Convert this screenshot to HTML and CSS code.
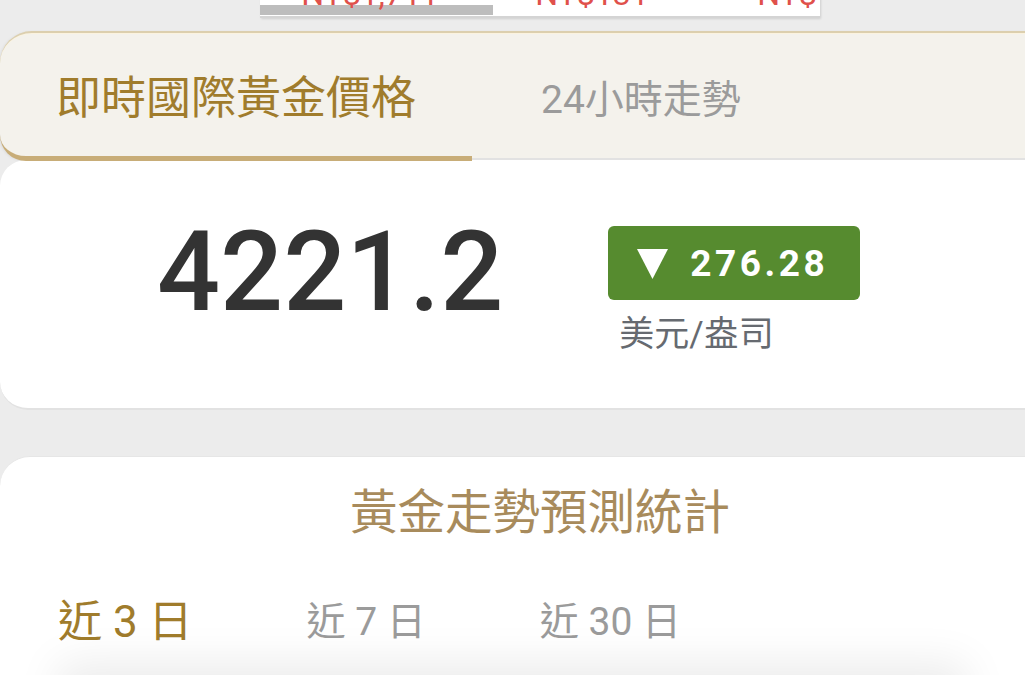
FILE: index.html
```html
<!DOCTYPE html>
<html>

<head>
    <meta charset="utf-8">
    <title>即時國際黃金價格</title>
    <link rel="stylesheet" href="styles.css">
</head>

<body>
    <div class="page">
        <div class="rate-table">
            <div class="rate-row">
                <div class="rate-cell">NT$1,711</div>
                <div class="rate-cell">NT$131</div>
                <div class="rate-cell">NT$145</div>
            </div>
            <div class="scrollbar">
                <div class="scrollbar-thumb"></div>
            </div>
        </div>

        <div class="tabs">
            <div class="tab active">即時國際黃金價格</div>
            <div class="tab">24小時走勢</div>
        </div>

        <div class="price-card">
            <div class="price">4221.2</div>
            <div class="change-col">
                <div class="change down">
                    <svg class="change-arrow" width="31" height="30" viewBox="0 0 31 30">
                        <polygon points="0,0 31,0 15.5,30" fill="#fff" />
                    </svg>
                    <span class="change-value">276.28</span>
                </div>
                <div class="unit">美元/盎司</div>
            </div>
        </div>

        <div class="forecast-card">
            <div class="forecast-title">黃金走勢預測統計</div>
            <div class="periods">
                <div class="period active">近 3 日</div>
                <div class="period">近 7 日</div>
                <div class="period">近 30 日</div>
            </div>
        </div>
    </div>

    <div class="bottom-shade"></div>
</body>

</html>
```

FILE: styles.css
```css
body {
    margin: 0;
    background: #ececec;
    font-family: Roboto, "Noto Sans CJK TC", sans-serif;
    overflow: hidden;
}

.page {
    width: 1080px;
}

/* exchange table, scrolled almost out of view */
.rate-table {
    width: 560px;
    margin: -16px auto 0;
    background: white;
    border-bottom: 2px solid #d4d4d4;
    box-shadow: 1px 1px 2px rgba(0, 0, 0, 0.12);
    padding-bottom: 1px;
    overflow: hidden;
}

.rate-row {
    display: flex;
    height: 20px;
    line-height: 20px;
    margin-left: -1px;
}

.rate-cell {
    flex: 0 0 222px;
    text-align: center;
    font-size: 32px;
    color: #e0514b;
    white-space: nowrap;
}

.scrollbar {
    margin-top: 1px;
    height: 10px;
}

.scrollbar-thumb {
    width: 233px;
    height: 100%;
    background: #bdbdbd;
}

/* tabs */
.tabs {
    display: flex;
    margin-top: 13px;
    height: 125px;
    background: #f4f2ec;
    border-top: 2px solid #dccfae;
    border-bottom: 2px solid #e2e2e2;
    border-radius: 32px 0 0 26px;
    box-shadow: inset 0 1px 0 #fbf3df, -1px 1px 3px rgba(0, 0, 0, 0.08);
}

.tab {
    display: flex;
    align-items: center;
    font-size: 39px;
    color: #9b9b9b;
    padding-left: 69px;
}

.tab.active {
    width: 472px;
    box-sizing: border-box;
    padding: 0;
    justify-content: center;
    font-size: 45px;
    color: #a07c2c;
    border-bottom: 5px solid #c8ad78;
    border-radius: 0 0 0 26px;
    margin-bottom: -3px;
}

/* price */
.price-card {
    display: flex;
    align-items: flex-start;
    height: 192px;
    padding: 56px 0 0 157px;
    background: white;
    border-radius: 26px 0 0 28px;
    border-bottom: 2px solid #e2e2e2;
}

.price {
    font-size: 111px;
    line-height: 112px;
    font-weight: 500;
    color: #333;
}

.change-col {
    margin-left: 105px;
    margin-top: 10px;
}

.change {
    display: flex;
    align-items: center;
    box-sizing: border-box;
    width: 252px;
    height: 74px;
    padding-left: 29px;
    border-radius: 6px;
    background: #568b2f;
    color: white;
}

.change-arrow {
    margin-top: 2px;
}

.change-value {
    margin-left: 22px;
    font-size: 37px;
    font-weight: 700;
    letter-spacing: 3.5px;
}

.unit {
    margin-top: 14px;
    padding-left: 11px;
    font-size: 35px;
    line-height: 1.2;
    color: #666a70;
}

/* forecast */
.forecast-card {
    margin-top: 46px;
    height: 260px;
    padding-top: 28px;
    background: white;
    border-radius: 30px 0 0 0;
    border-top: 1px solid #e6e6e6;
}

.forecast-title {
    text-align: center;
    font-size: 47.5px;
    line-height: 1.2;
    color: #a88b5c;
}

.periods {
    display: flex;
    align-items: center;
    gap: 114px;
    margin-top: 55px;
    padding-left: 58px;
}

.period {
    font-size: 39px;
    line-height: 50px;
    color: #9b9b9b;
}

.period.active {
    font-size: 44px;
    color: #a07c2c;
}

.bottom-shade {
    position: fixed;
    left: 70px;
    right: 70px;
    bottom: -40px;
    height: 40px;
    box-shadow: 0 0 44px 12px rgba(0, 0, 0, 0.08);
}
```
